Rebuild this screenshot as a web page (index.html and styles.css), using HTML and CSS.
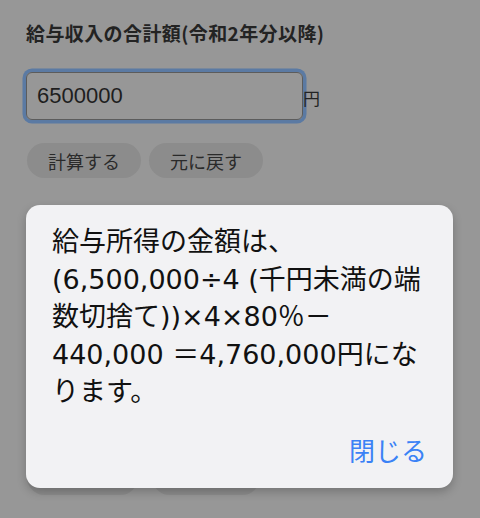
FILE: index.html
```html
<!DOCTYPE html>
<html lang="ja">
<head>
<meta charset="utf-8">
<title>給与所得の計算</title>
<link rel="stylesheet" href="styles.css">
</head>
<body>
<main class="page">
  <h1 class="title">給与収入の合計額(令和2年分以降)</h1>
  <div class="field-row">
    <div class="input">6500000</div>
    <span class="unit">円</span>
  </div>
  <div class="btn-row">
    <span class="pill">計算する</span>
    <span class="pill">元に戻す</span>
  </div>
  <div class="btn-row lower">
    <span class="pill blank w1"></span>
    <span class="pill blank w2"></span>
  </div>
</main>
<div class="dialog" role="alertdialog">
  <p class="message">給与所得の金額は、(6,500,000÷4 (千円未満の端数切捨て))×4×80％－<br>440,000 ＝4,760,000円になります。</p>
  <div class="actions"><span class="close">閉じる</span></div>
</div>
</body>
</html>
```
FILE: styles.css
```css
html, body {
  margin: 0;
  padding: 0;
}
body {
  background: #979797;
  width: 480px;
  height: 518px;
  overflow: hidden;
  position: relative;
  font-family: "Noto Sans CJK JP", sans-serif;
  color: #222;
}
.page {
  padding: 21px 26px 0 26px;
}
.title {
  margin: 0;
  font-size: 19px;
  line-height: 24px;
  font-weight: 700;
  letter-spacing: 0.4px;
  color: #232323;
}
.field-row {
  display: flex;
  align-items: center;
  margin-top: 27px;
}
.input {
  box-sizing: border-box;
  width: 277px;
  height: 48px;
  border: 1.5px solid #5c5c5c;
  border-radius: 6px;
  box-shadow: 0 0 0 3.5px #5b7aa3;
  padding-left: 10px;
  display: flex;
  align-items: center;
  font-family: "Liberation Sans", sans-serif;
  font-size: 22px;
  color: #1e1e1e;
}
.unit {
  font-size: 17px;
  color: #232323;
  padding-top: 2px;
}
.btn-row {
  display: flex;
  gap: 8px;
  margin-top: 23px;
}
.pill {
  display: inline-flex;
  align-items: center;
  height: 35px;
  padding: 0 21px;
  border-radius: 18px;
  background: #8c8c8c;
  font-size: 18px;
  color: #2a2a2a;
}
.btn-row .pill:first-child {
  margin-left: 1px;
}
.lower {
  margin-top: 282px;
  gap: 14px;
}
.blank {
  padding: 0;
}
.w1 { width: 111px; }
.w2 { width: 108px; }
.dialog {
  position: absolute;
  left: 26px;
  top: 205px;
  width: 427px;
  height: 283px;
  box-sizing: border-box;
  padding: 18px 26px 22px 26px;
  background: #f2f2f4;
  border-radius: 14px;
  box-shadow: 0 4px 10px rgba(0, 0, 0, 0.22);
  display: flex;
  flex-direction: column;
}
.message {
  margin: 0;
  font-family: "DejaVu Sans", "Noto Sans CJK JP", sans-serif;
  font-size: 27px;
  line-height: 37.5px;
  color: #111;
}
.actions {
  margin-top: auto;
  text-align: right;
}
.close {
  font-size: 26px;
  line-height: 32px;
  color: #3b82f6;
}
```
